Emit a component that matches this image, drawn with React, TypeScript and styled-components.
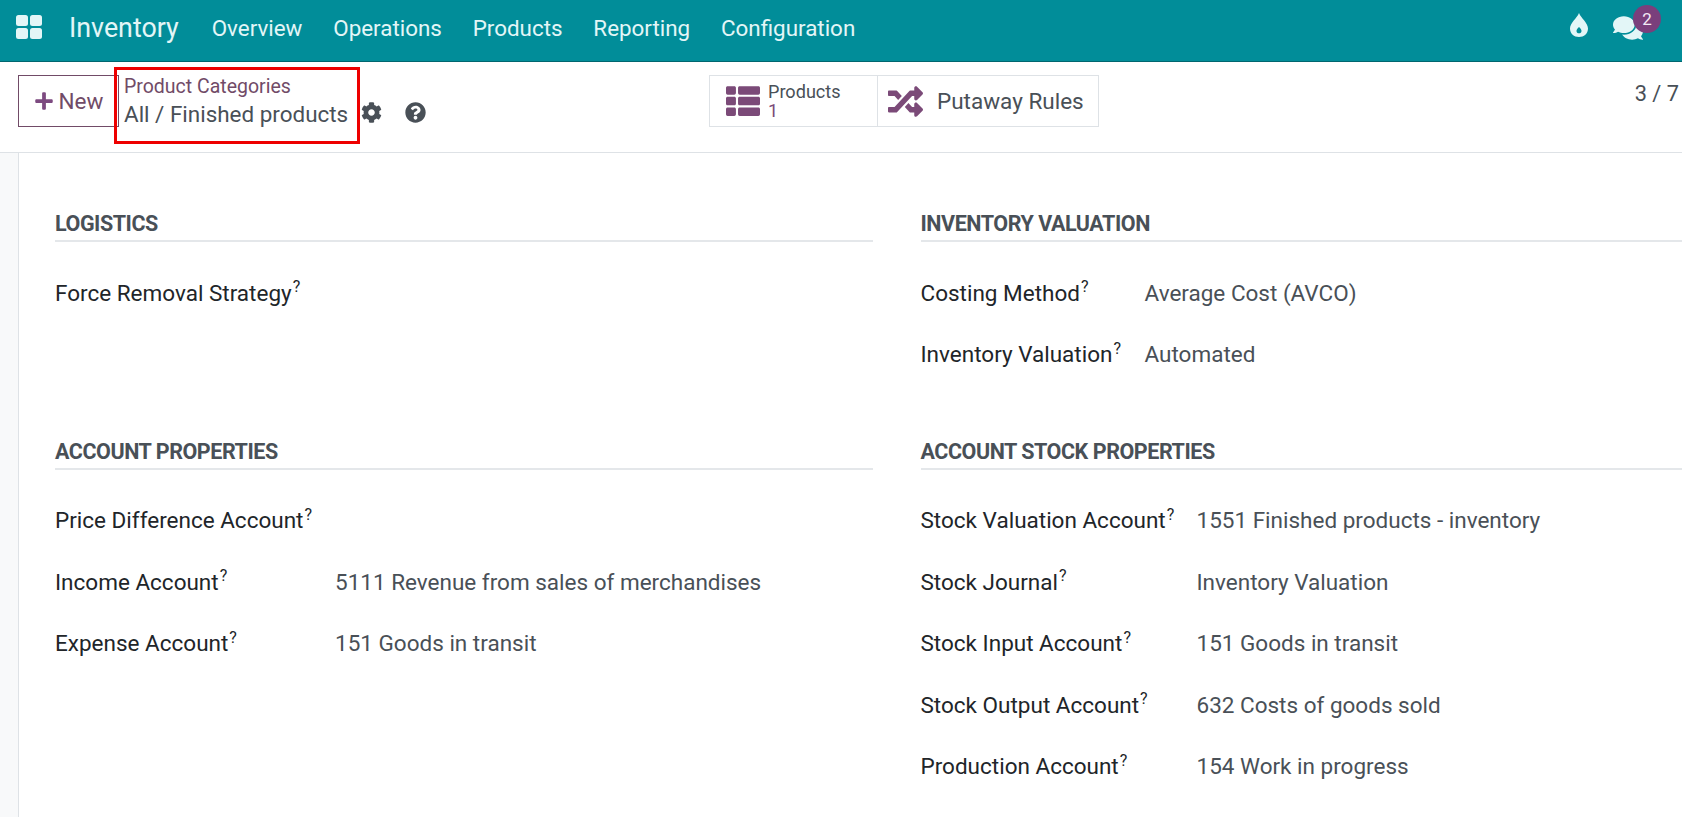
import React from "react";
import styled, { createGlobalStyle } from "styled-components";
import {
  FaCog,
  FaComments,
  FaPlus,
  FaQuestionCircle,
  FaRandom,
  FaThList,
} from "react-icons/fa";

type RowData = {
  label: string;
  value?: string;
};

type GroupData = {
  title: string;
  labelWidth: number;
  rows: RowData[];
};

const GlobalStyle = createGlobalStyle`
  html, body {
    margin: 0;
    height: 100%;
    overflow: hidden;
    background: #fff;
  }
  body {
    font-family: Roboto, "Liberation Sans", sans-serif;
    color: #212529;
  }
`;

const Page = styled.div`
  display: flex;
  flex-direction: column;
  width: 1682px;
  height: 817px;
  overflow: hidden;
`;

const Navbar = styled.header`
  display: flex;
  align-items: center;
  flex: 0 0 62px;
  box-sizing: border-box;
  padding: 0 0 6px 16px;
  background: #018d99;
  border-bottom: 1px solid #00666f;
  color: #e3f6f7;
`;

const AppsIcon = styled.svg`
  width: 26px;
  height: 24px;
  margin-right: 27px;
  margin-top: -2px;
`;

const Brand = styled.div`
  font-size: 26.8px;
  margin-right: 33px;
`;

const NavLink = styled.div`
  font-size: 22.4px;
  margin-right: 30.8px;
`;

const NavIcons = styled.div`
  display: flex;
  align-items: center;
  margin-left: auto;
  margin-right: 39px;
  gap: 25px;
`;

const DropIcon = styled.svg`
  width: 18px;
  height: 24px;
  margin-top: -5px;
`;

const ChatIcon = styled.div`
  position: relative;
  display: flex;
  font-size: 30px;
`;

const Badge = styled.span`
  position: absolute;
  top: -8px;
  left: 20px;
  display: flex;
  align-items: center;
  justify-content: center;
  width: 28px;
  height: 28px;
  border-radius: 50%;
  background: #7a3f7c;
  color: #f3e9f3;
  font-size: 17px;
`;

const ControlPanel = styled.div`
  position: relative;
  display: flex;
  align-items: flex-start;
  flex: 0 0 91px;
  box-sizing: border-box;
  padding: 13px 3px 0 18px;
  border-bottom: 1px solid #dee2e6;
`;

const NewButton = styled.div`
  display: flex;
  align-items: center;
  justify-content: center;
  gap: 5px;
  box-sizing: border-box;
  width: 101px;
  height: 52px;
  border: 1px solid #714b67;
  color: #714b67;
  font-size: 22.5px;
  svg {
    font-size: 20px;
    color: #7d4a80;
  }
`;

const Breadcrumbs = styled.div`
  margin-left: 5px;
  width: 229px;
`;

const BreadcrumbParent = styled.div`
  color: #714b67;
  font-size: 19.5px;
  line-height: 22px;
  margin-top: 1px;
`;

const BreadcrumbCurrent = styled.div`
  color: #495057;
  font-size: 22.45px;
  line-height: 30px;
  margin-top: 1px;
`;

const Highlight = styled.div`
  position: absolute;
  left: 114px;
  top: 5px;
  width: 246px;
  height: 77px;
  box-sizing: border-box;
  border: 3px solid #ee0000;
`;

const ActionIcons = styled.div`
  display: flex;
  align-items: center;
  gap: 23px;
  margin-top: 27px;
  margin-left: 8px;
  color: #495057;
  font-size: 21px;
`;

const StatButtons = styled.div`
  display: flex;
  margin-left: 283px;
  height: 52px;
`;

const StatButton = styled.div<{ $width: number; $inset: number }>`
  display: flex;
  align-items: center;
  box-sizing: border-box;
  width: ${({ $width }) => $width}px;
  margin-right: -1px;
  padding-left: ${({ $inset }) => $inset}px;
  border: 1px solid #dee2e6;
  color: #7b4a78;
  svg {
    flex: none;
  }
`;

const StatText = styled.div`
  margin-left: 8px;
  font-size: 18.1px;
  line-height: 19px;
  span {
    display: block;
    color: #495057;
  }
`;

const StatLabel = styled.div`
  margin-left: 14px;
  color: #495057;
  font-size: 22.5px;
`;

const Pager = styled.div`
  margin-left: auto;
  margin-top: 6px;
  color: #495057;
  font-size: 21.8px;
`;

const Content = styled.main`
  display: flex;
  flex: 1;
  min-height: 0;
`;

const Gutter = styled.div`
  flex: 0 0 18px;
  background: #f8f9fa;
  border-right: 1px solid #dee2e6;
`;

const Sheet = styled.div`
  display: grid;
  flex: 1;
  grid-template-columns: 818px 1fr;
  grid-template-rows: 227.5px auto;
  align-content: start;
  column-gap: 47.5px;
  padding: 56px 0 0 36px;
  min-width: 0;
`;

const Heading = styled.h2`
  margin: 0 0 20px;
  height: 33px;
  box-sizing: border-box;
  border-bottom: 2px solid #e4e7ea;
  color: #495057;
  font-size: 21.5px;
  font-weight: 700;
  line-height: 30px;
  letter-spacing: -0.45px;
  text-transform: uppercase;
`;

const Row = styled.div<{ $labelWidth: number }>`
  display: grid;
  grid-template-columns: ${({ $labelWidth }) => $labelWidth}px 1fr;
  align-items: center;
  height: 61.5px;
  font-size: 22.5px;
`;

const Label = styled.div`
  color: #212529;
  white-space: nowrap;
  sup {
    margin-left: 1px;
    font-size: 16px;
    line-height: 0;
    color: #212529;
  }
`;

const Value = styled.div`
  color: #495057;
  white-space: nowrap;
`;

const groups: GroupData[] = [
  {
    title: "Logistics",
    labelWidth: 280,
    rows: [{ label: "Force Removal Strategy" }],
  },
  {
    title: "Inventory Valuation",
    labelWidth: 224,
    rows: [
      { label: "Costing Method", value: "Average Cost (AVCO)" },
      { label: "Inventory Valuation", value: "Automated" },
    ],
  },
  {
    title: "Account Properties",
    labelWidth: 280,
    rows: [
      { label: "Price Difference Account" },
      { label: "Income Account", value: "5111 Revenue from sales of merchandises" },
      { label: "Expense Account", value: "151 Goods in transit" },
    ],
  },
  {
    title: "Account Stock Properties",
    labelWidth: 276,
    rows: [
      { label: "Stock Valuation Account", value: "1551 Finished products - inventory" },
      { label: "Stock Journal", value: "Inventory Valuation" },
      { label: "Stock Input Account", value: "151 Goods in transit" },
      { label: "Stock Output Account", value: "632 Costs of goods sold" },
      { label: "Production Account", value: "154 Work in progress" },
    ],
  },
];

const navLinks = ["Overview", "Operations", "Products", "Reporting", "Configuration"];

const App = () => {
  return (
    <Page>
      <GlobalStyle />
      <Navbar>
        <AppsIcon viewBox="0 0 26 24">
          <rect x="0" y="0" width="12" height="11" rx="2.5" fill="currentColor" />
          <rect x="14" y="0" width="12" height="11" rx="2.5" fill="currentColor" />
          <rect x="0" y="13" width="12" height="11" rx="2.5" fill="currentColor" />
          <rect x="14" y="13" width="12" height="11" rx="2.5" fill="currentColor" />
        </AppsIcon>
        <Brand>Inventory</Brand>
        {navLinks.map((link) => (
          <NavLink key={link}>{link}</NavLink>
        ))}
        <NavIcons>
          <DropIcon viewBox="0 0 18 24">
            <path
              fillRule="evenodd"
              fill="currentColor"
              d="M9 0C11 5 18 10 18 15.500C18 20.500 14 24 9 24C4 24 0 20.500 0 15.500C0 10 7 5 9 0ZM9 14C7.500 15.500 6.500 16.500 6.500 18C6.500 19.400 7.600 20.300 9 20.300C10.400 20.300 11.500 19.400 11.500 18C11.500 16.500 10.500 15.500 9 14Z"
            />
          </DropIcon>
          <ChatIcon>
            <FaComments />
            <Badge>2</Badge>
          </ChatIcon>
        </NavIcons>
      </Navbar>
      <ControlPanel>
        <NewButton>
          <FaPlus />
          New
        </NewButton>
        <Breadcrumbs>
          <BreadcrumbParent>Product Categories</BreadcrumbParent>
          <BreadcrumbCurrent>All / Finished products</BreadcrumbCurrent>
        </Breadcrumbs>
        <ActionIcons>
          <FaCog />
          <FaQuestionCircle />
        </ActionIcons>
        <StatButtons>
          <StatButton $width={169} $inset={16}>
            <FaThList size={34} />
            <StatText>
              <span>Products</span>1
            </StatText>
          </StatButton>
          <StatButton $width={222} $inset={10}>
            <FaRandom size={35} />
            <StatLabel>Putaway Rules</StatLabel>
          </StatButton>
        </StatButtons>
        <Pager>3 / 7</Pager>
        <Highlight />
      </ControlPanel>
      <Content>
        <Gutter />
        <Sheet>
          {groups.map((group) => (
            <section key={group.title}>
              <Heading>{group.title}</Heading>
              {group.rows.map((row) => (
                <Row key={row.label} $labelWidth={group.labelWidth}>
                  <Label>
                    {row.label}
                    <sup>?</sup>
                  </Label>
                  {row.value && <Value>{row.value}</Value>}
                </Row>
              ))}
            </section>
          ))}
        </Sheet>
      </Content>
    </Page>
  );
};

export default App;
